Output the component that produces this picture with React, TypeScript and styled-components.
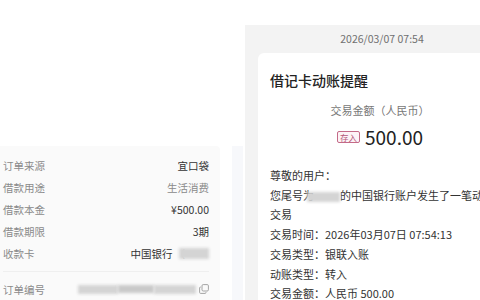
import styled, { createGlobalStyle } from "styled-components";

const GlobalStyle = createGlobalStyle`
  html, body {
    margin: 0;
    padding: 0;
    background: #fff;
  }
  * {
    box-sizing: border-box;
  }
`;

const FONT = `"Noto Sans CJK SC", "Noto Sans", sans-serif`;

// 借款订单信息（左侧截图）
const orderRows = [
  { label: "订单来源", value: "宜口袋", muted: false },
  { label: "借款用途", value: "生活消费", muted: true },
  { label: "借款本金", value: "¥500.00", muted: false },
  { label: "借款期限", value: "3期", muted: false },
];

const App: React.FC = () => {
  return (
    <>
      <GlobalStyle />
      <Page>
        {/* 左侧：借款订单 */}
        <LeftShot>
          <OrderPanel>
            {orderRows.map((row) => (
              <OrderRow key={row.label}>
                <Label>{row.label}</Label>
                <Value $muted={row.muted}>{row.value}</Value>
              </OrderRow>
            ))}
            <OrderRow>
              <Label>收款卡</Label>
              <Value>
                中国银行 <Paren>（</Paren>
                <Blur $w={30} $h={11} $shift={-6} />
              </Value>
            </OrderRow>
            <Divider />
            <OrderRow>
              <Label>订单编号</Label>
              <OrderNo>
                <Blur $w={40} $h={9} />
                <Blur $w={36} $h={8} $tone="#c9c9c9" />
                <Blur $w={42} $h={9} />
                <CopyIcon viewBox="0 0 10 10">
                  <rect x="3" y="0.6" width="6.4" height="6.4" rx="1.2" />
                  <path d="M1.8 3 H1.6 A1 1 0 0 0 0.6 4 V8.4 A1 1 0 0 0 1.6 9.4 H6 A1 1 0 0 0 7 8.4 V8.2" />
                </CopyIcon>
              </OrderNo>
            </OrderRow>
          </OrderPanel>
          <Strip />
        </LeftShot>

        {/* 右侧：银行短信通知 */}
        <RightShot>
          <TimeStamp>2026/03/07 07:54</TimeStamp>
          <Card>
            <Title>借记卡动账提醒</Title>
            <AmountLabel>交易金额（人民币）</AmountLabel>
            <AmountRow>
              <Badge>存入</Badge>
              <Amount>500.00</Amount>
            </AmountRow>
            <Body>
              <Line>尊敬的用户：</Line>
              <Line>
                您尾号为
                <Blur $w={33} $h={10} $shift={-7} />
                的中国银行账户发生了一笔动账
              </Line>
              <Line>交易</Line>
              <Line>交易时间：2026年03月07日 07:54:13</Line>
              <Line>交易类型：银联入账</Line>
              <Line>动账类型：转入</Line>
              <Line>交易金额：人民币 500.00</Line>
            </Body>
          </Card>
        </RightShot>
      </Page>
    </>
  );
};

const Page = styled.div`
  width: 480px;
  height: 300px;
  display: flex;
  overflow: hidden;
  background: #fff;
  font-family: ${FONT};
`;

// 左侧
const LeftShot = styled.div`
  flex: none;
  width: 245px;
  padding-top: 146px;
  display: flex;
`;

const OrderPanel = styled.div`
  width: 220px;
  background: #fafafa;
  border-top-right-radius: 4px;
  padding: 8px 11px 0 3px;
  display: flex;
  flex-direction: column;
`;

const OrderRow = styled.div`
  height: 22px;
  display: flex;
  justify-content: space-between;
  align-items: center;
`;

const Label = styled.span`
  font-size: 10.5px;
  color: #8a8a8a;
`;

const Value = styled.span<{ $muted?: boolean }>`
  display: flex;
  align-items: center;
  font-size: 10.5px;
  color: ${(p) => (p.$muted ? "#8a8a8a" : "#333")};
  white-space: nowrap;
`;

const Paren = styled.span`
  color: #aaa;
  margin-left: 2px;
`;

const Divider = styled.div`
  height: 1px;
  background: #efefef;
  margin: 7px 0 6px;
`;

const OrderNo = styled.div`
  display: flex;
  align-items: center;
`;

// 打码区域
const Blur = styled.span<{ $w: number; $h: number; $tone?: string; $shift?: number }>`
  display: inline-block;
  width: ${(p) => p.$w}px;
  height: ${(p) => p.$h}px;
  margin-left: ${(p) => p.$shift ?? 0}px;
  background: ${(p) => p.$tone ?? "#d4d4d4"};
  filter: blur(1.5px);
  vertical-align: middle;
`;

const CopyIcon = styled.svg`
  width: 10px;
  height: 10px;
  margin-left: 3px;
  fill: none;
  stroke: #9a9a9a;
  stroke-width: 0.9;
`;

const Strip = styled.div`
  width: 11px;
  margin-left: 12px;
  background: #f7f8fb;
`;

// 右侧
const RightShot = styled.div`
  flex: none;
  width: 274px;
  margin-top: 25px;
  background: #f3f3f3;
  padding-left: 13px;
  display: flex;
  flex-direction: column;
`;

const TimeStamp = styled.div`
  height: 28px;
  line-height: 28px;
  text-align: center;
  font-size: 10.5px;
  color: #707070;
  padding-right: 13px;
`;

const Card = styled.div`
  flex: 1;
  width: 244px;
  background: #fff;
  border-radius: 6px 6px 0 0;
  padding: 17px 12px 0;
`;

const Title = styled.div`
  font-size: 14px;
  line-height: 20px;
  font-weight: 500;
  color: #222;
`;

const AmountLabel = styled.div`
  margin-top: 12px;
  font-size: 11px;
  line-height: 16px;
  text-align: center;
  color: #777;
`;

const AmountRow = styled.div`
  margin-top: 6px;
  height: 26px;
  display: flex;
  justify-content: center;
  align-items: center;
  gap: 5px;
`;

const Badge = styled.span`
  font-size: 8.5px;
  line-height: 10px;
  padding: 0 2px;
  border: 1px solid #c46a88;
  border-radius: 2px;
  color: #b5587a;
  background: #fdf3f6;
`;

const Amount = styled.span`
  font-size: 19px;
  color: #222;
  line-height: 26px;
`;

const Body = styled.div`
  margin-top: 16px;
  font-size: 11px;
  line-height: 19.7px;
  color: #333;
`;

const Line = styled.div`
  white-space: nowrap;
`;

export default App;
